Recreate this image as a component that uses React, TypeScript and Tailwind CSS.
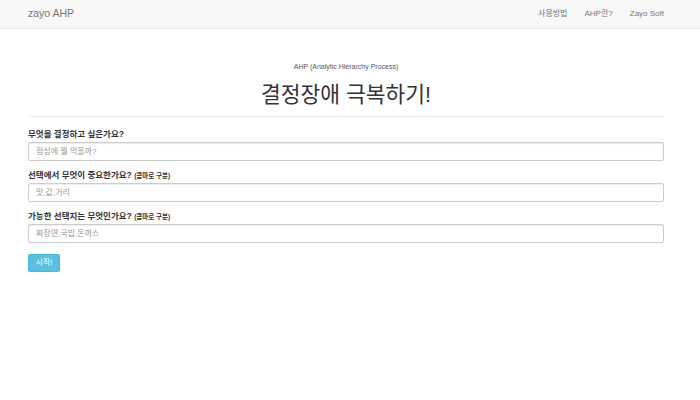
import React from "react"

const font = { fontFamily: '"Liberation Sans", "Noto Sans CJK KR", sans-serif' }

const fields = [
  { label: "무엇을 결정하고 싶은가요?", hint: "", placeholder: "점심에 뭘 먹을까?" },
  { label: "선택에서 무엇이 중요한가요?", hint: "(콤마로 구분)", placeholder: "맛,값,거리" },
  { label: "가능한 선택지는 무엇인가요?", hint: "(콤마로 구분)", placeholder: "짜장면,국밥,돈까스" },
]

export default function App() {
  return (
    <div className="w-[700px] h-[400px] bg-white text-[#333]" style={font}>
      {/* Navbar */}
      <nav className="h-[29px] bg-[#f8f8f8] border-b border-[#ececec] flex items-center justify-between pl-[28px] pr-[36px]">
        <span className="text-[10.5px] text-[#777]">zayo AHP</span>
        <div className="flex items-center gap-[17px] text-[8px] text-[#777]">
          <span>사용방법</span>
          <span>AHP란?</span>
          <span>Zayo Soft</span>
        </div>
      </nav>

      <main className="pl-[28px] pr-[36px]">
        <div className="pt-[33px] text-center">
          <p className="h-[10px] text-[7px] leading-[10px] text-[#555]">AHP (Analytic Hierarchy Process)</p>
          <h1 className="mt-[9px] h-[28px] text-[21.5px] leading-[28px] text-[#333]">결정장애 극복하기!</h1>
        </div>
        <div className="mt-[7px] h-px bg-[#eee]" />

        <form className="pt-[12px]">
          {fields.map(f => (
            <div key={f.label} className="h-[41px]">
              <div className="h-[13px] text-[8.5px] leading-[11px] font-bold whitespace-nowrap overflow-visible">
                {f.label} {f.hint && <span className="text-[6.5px]">{f.hint}</span>}
              </div>
              <input
                type="text"
                placeholder={f.placeholder}
                className="block w-full h-[19px] border border-[#ccc] rounded-[2px] px-[7px] text-[8px] leading-[17px] placeholder:text-[#999] shadow-[inset_0_1px_1px_rgba(0,0,0,0.075)]"
              />
            </div>
          ))}
          <button
            type="button"
            className="block mt-[2px] h-[18px] w-[32px] rounded-[2px] bg-[#5bc0de] border border-[#46b8da] text-white text-[8px] leading-[16px]"
          >
            시작!
          </button>
        </form>
      </main>
    </div>
  )
}
